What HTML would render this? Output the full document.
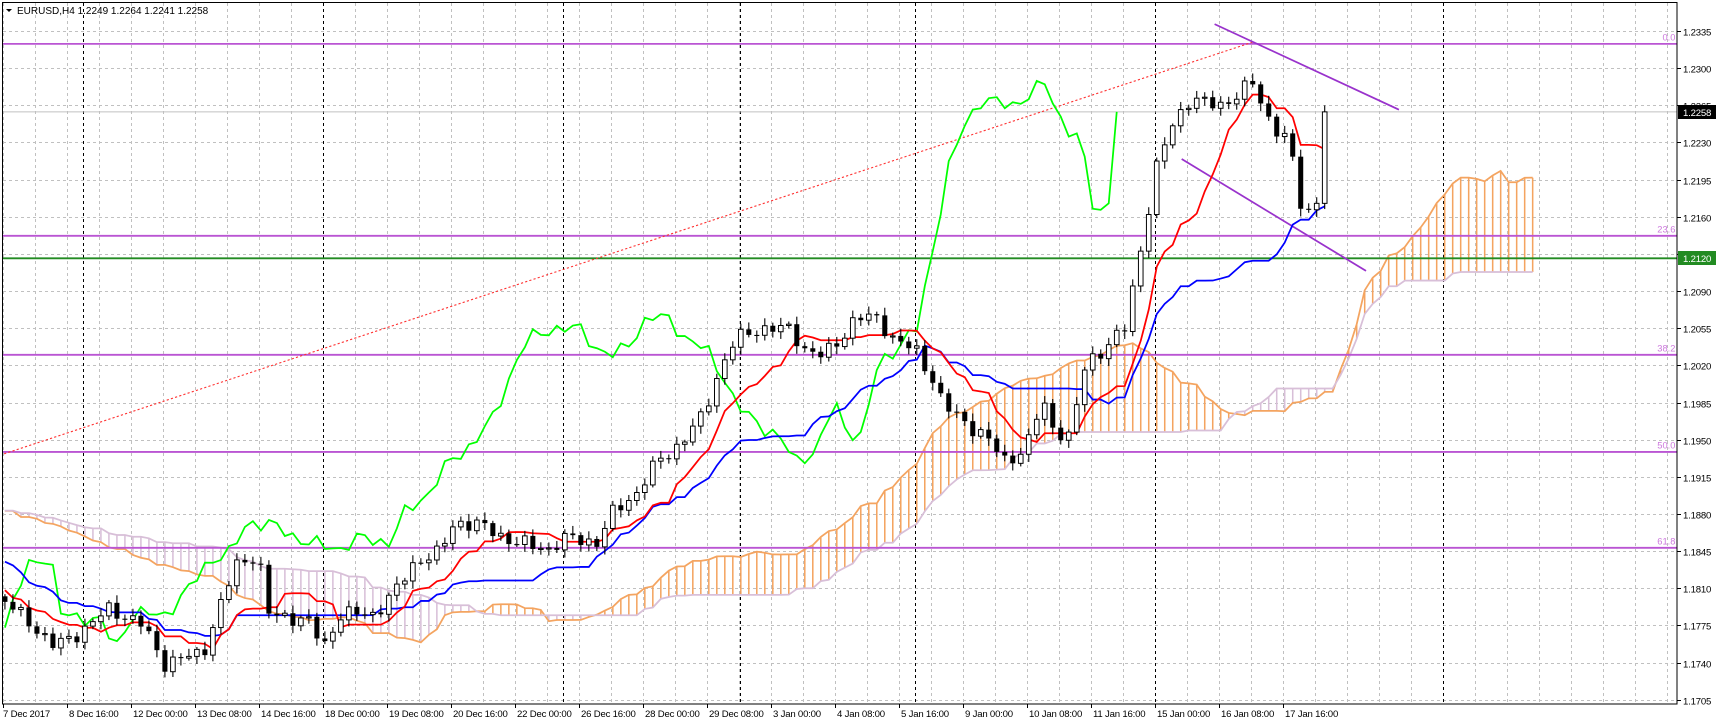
<!DOCTYPE html>
<html><head><meta charset="utf-8">
<style>
html,body{margin:0;padding:0;background:#fff;}
svg{display:block;font-family:"Liberation Sans",sans-serif;}
</style></head>
<body>
<svg id="s" width="1716" height="725" xmlns="http://www.w3.org/2000/svg">
<defs><clipPath id="cp"><rect x="3" y="3" width="1674" height="701"/></clipPath></defs>
<rect x="0" y="0" width="1716" height="725" fill="#fff"/>
<g id="grid"></g>
<g clip-path="url(#cp)">
  <g id="data" transform="scale(1.0972,1.0968)"></g>
</g>
<rect x="2.5" y="2.5" width="1674.5" height="701.5" fill="none" stroke="#000" stroke-width="1"/>
<g id="axis" font-size="9.6" fill="#000" letter-spacing="-0.2"></g>
<text x="17" y="14" font-size="10">EURUSD,H4  1.2249 1.2264 1.2241 1.2258</text>
<path d="M6 9 L12 9 L9 12 Z" fill="#000"/>
</svg>
<script>
(function(){
var NS="http://www.w3.org/2000/svg";
function el(p,t,a){var e=document.createElementNS(NS,t);for(var k in a)e.setAttribute(k,a[k]);p.appendChild(e);return e;}
var grid=document.getElementById('grid'),axis=document.getElementById('axis'),data=document.getElementById('data');
for(var k=0;k<19;k++){var y=Math.round(31+37.15*k)+0.5;
 el(grid,'line',{x1:3,x2:1677,y1:y,y2:y,stroke:'#c0c0c0','stroke-dasharray':'3,3'});
 el(axis,'line',{x1:1677,x2:1681,y1:y,y2:y,stroke:'#000'});
 var t=el(axis,'text',{x:1683,y:y+4});t.textContent=(1.2335-0.0035*k).toFixed(4);}
for(var x=3;x<1677;x+=32){el(grid,'line',{x1:x+0.5,x2:x+0.5,y1:3,y2:704,stroke:'#c0c0c0','stroke-dasharray':'3,3'});}
[83,323,563,740,915,1155,1443].forEach(function(x){el(grid,'line',{x1:x+0.5,x2:x+0.5,y1:3,y2:704,stroke:'#000','stroke-dasharray':'3,3'});});
var labs=["7 Dec 2017","8 Dec 16:00","12 Dec 00:00","13 Dec 08:00","14 Dec 16:00","18 Dec 00:00","19 Dec 08:00","20 Dec 16:00","22 Dec 00:00","26 Dec 16:00","28 Dec 00:00","29 Dec 08:00","3 Jan 00:00","4 Jan 08:00","5 Jan 16:00","9 Jan 00:00","10 Jan 08:00","11 Jan 16:00","15 Jan 00:00","16 Jan 08:00","17 Jan 16:00"];
labs.forEach(function(s,i){var x=3+64*i;el(axis,'line',{x1:x+0.5,x2:x+0.5,y1:704,y2:708,stroke:'#000'});var t=el(axis,'text',{x:x+(i?2:0),y:717});t.textContent=s;});
var K=[[-440,480],[-300,450],[-200,470],[-100,520],[-40,540],[0,545],[30,570],[50,590],[75,575],[100,555],[130,570],[150,605],[185,595],[200,555],[215,515],[235,505],[245,560],[280,565],[295,590],[310,560],[340,560],[360,540],[380,510],[400,505],[415,475],[440,480],[470,495],[500,500],[520,490],[545,495],[560,465],[580,450],[600,420],[620,405],[640,380],[655,340],[670,310],[690,300],[720,300],[735,320],[750,325],[765,310],[780,290],[800,290],[815,310],[835,320],[850,345],[860,370],[880,385],[900,400],[915,420],[935,410],[950,365],[960,390],[975,400],[990,330],[1010,315],[1025,300],[1035,250],[1045,200],[1055,150],[1070,110],[1085,90],[1100,95],[1115,95],[1130,85],[1143,75],[1150,95],[1160,115],[1175,130],[1185,185],[1195,195],[1205,170],[1214,102]];
function interp(x){for(var i=0;i<K.length-1;i++){if(x<=K[i+1][0]){var a=K[i],b=K[i+1];var t=(x-a[0])/(b[0]-a[0]);return a[1]+(b[1]-a[1])*t;}}return K[K.length-1][1];}
var dx=7.29,x0=4.5,PRE=60,N=166,T=PRE+N;
var O=[],C=[],H=[],L=[];
for(var j=0;j<T;j++){var i=j-PRE;var x=x0+i*dx;
 var c=interp(x)+5*Math.sin(i*2.3)+3*Math.sin(i*5.1);if(i==N-1)c=102;
 var o=j?C[j-1]:c+3;C.push(c);O.push(o);
 H.push(Math.min(o,c)-(2+5*Math.abs(Math.sin(i*1.7))));L.push(Math.max(o,c)+(2+5*Math.abs(Math.cos(i*1.3))));}
function mid(j,n){var h=1e9,l=-1e9;for(var k=Math.max(0,j-n+1);k<=j;k++){h=Math.min(h,H[k]);l=Math.max(l,L[k]);}return (h+l)/2;}
var TK=[],KJ=[];for(var j=0;j<T;j++){TK.push(mid(j,9));KJ.push(mid(j,26));}
function xAt(j){return x0+(j-PRE)*dx;}
var SA=[],SB=[];
for(var j=PRE;j<T+26;j++){var s=j-26;SA.push([xAt(j),(TK[s]+KJ[s])/2]);SB.push([xAt(j),mid(s,52)]);}
for(var k=0;k<SA.length;k++){var a=SA[k][1],b=SB[k][1];el(data,'line',{x1:SA[k][0],x2:SA[k][0],y1:a,y2:b,stroke:a<b?'#F4A460':'#D8BFD8','stroke-width':1.4});}
function poly(pts,col,w){var d=pts.map(function(p,i){return (i?'L':'M')+p[0].toFixed(1)+' '+p[1].toFixed(1);}).join('');el(data,'path',{d:d,fill:'none',stroke:col,'stroke-width':w});}
poly(SA,'#F4A460',1.6);poly(SB,'#D8BFD8',1.6);
[[40,'0.0'],[215,'23.6'],[323.5,'38.2'],[412,'50.0'],[499.5,'61.8']].forEach(function(f){el(data,'line',{x1:0,x2:1530,y1:f[0],y2:f[0],stroke:'#BA55D3','stroke-width':1.7});var t=el(data,'text',{x:1527,y:f[0]-3,'text-anchor':'end','font-size':'8.5',fill:'#CC77DD'});t.textContent=f[1];});
el(data,'line',{x1:0,x2:1530,y1:235.5,y2:235.5,stroke:'#228B22','stroke-width':1.7});
el(data,'line',{x1:0,x2:1530,y1:102,y2:102,stroke:'#c0c0c0','stroke-width':1});
el(data,'line',{x1:0,x2:1143,y1:415,y2:38,stroke:'#FF3030','stroke-width':1,'stroke-dasharray':'2,2'});
el(data,'line',{x1:1107,x2:1275,y1:22,y2:100,stroke:'#9932CC','stroke-width':1.6});
el(data,'line',{x1:1077,x2:1245,y1:145,y2:247,stroke:'#9932CC','stroke-width':1.6});
var tp=[],kp=[],cp=[];
for(var j=PRE;j<T;j++){tp.push([xAt(j),TK[j]]);kp.push([xAt(j),KJ[j]]);if(j+26<T)cp.push([xAt(j),C[j+26]]);}
poly(cp,'#00FF00',1.6);poly(kp,'#0000FF',1.6);poly(tp,'#FF0000',1.6);
for(var j=PRE;j<T;j++){var x=xAt(j),o=O[j],c=C[j];
 el(data,'line',{x1:x,x2:x,y1:H[j],y2:L[j],stroke:'#000','stroke-width':1});
 var top=Math.min(o,c),hh=Math.max(Math.abs(o-c),1);
 if(c<o)el(data,'rect',{x:x-2.1,y:top,width:4.2,height:hh,fill:'#fff',stroke:'#000','stroke-width':0.9});
 else el(data,'rect',{x:x-2.3,y:top,width:4.6,height:hh,fill:'#000'});}
el(axis,'rect',{x:1678,y:105,width:38,height:14,fill:'#000'});
var t=el(axis,'text',{x:1683,y:116,fill:'#fff'});t.textContent='1.2258';
el(axis,'rect',{x:1678,y:251,width:38,height:14,fill:'#228B22'});
t=el(axis,'text',{x:1683,y:262,fill:'#fff'});t.textContent='1.2120';
})();
</script>
</body></html>
